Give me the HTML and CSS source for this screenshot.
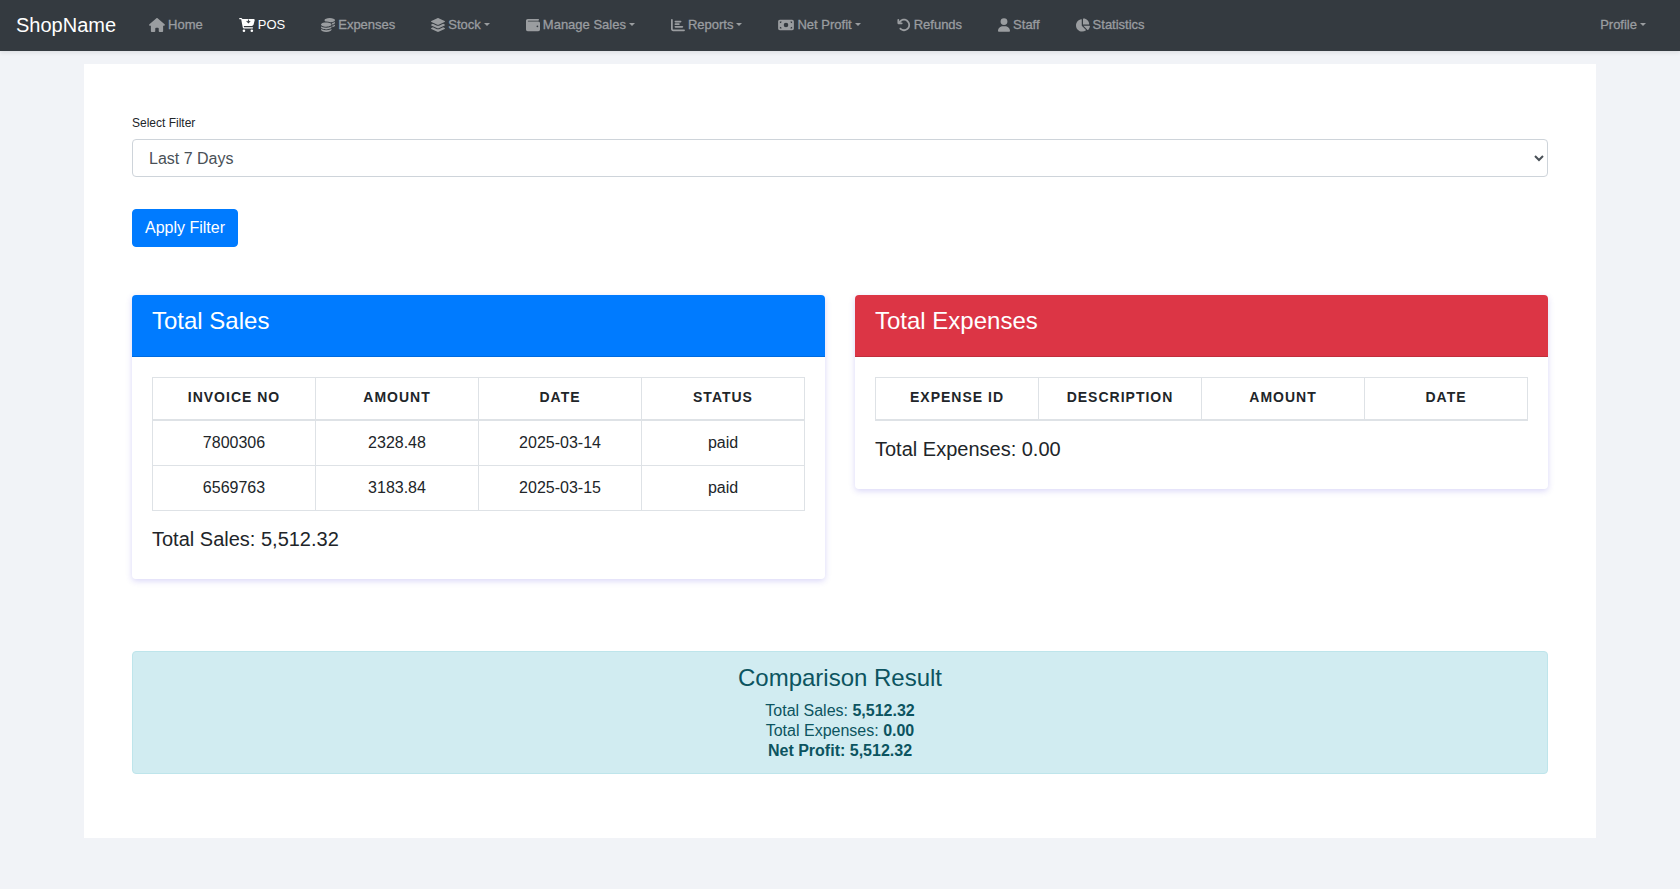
FILE: index.html
```html
<!DOCTYPE html>
<html lang="en">
<head>
<meta charset="utf-8">
<title>ShopName</title>
<link rel="stylesheet" href="styles.css">
</head>
<body>
<nav class="navbar">
  <a class="brand" href="#">ShopName</a>
  <ul class="nav">
    <li><a class="nav-link" href="#"><svg class="icon icon-wide" viewBox="0 0 576 512"><path d="M575.8 255.5c0 18-15 32.1-32 32.1l-32 0 .7 160.2c0 2.7-.2 5.4-.5 8.1l0 16.2c0 22.1-17.9 40-40 40l-16 0c-1.1 0-2.2 0-3.3-.1c-1.4 .1-2.8 .1-4.2 .1L416 512l-24 0c-22.1 0-40-17.9-40-40l0-24 0-64c0-17.7-14.3-32-32-32l-64 0c-17.7 0-32 14.3-32 32l0 64 0 24c0 22.1-17.9 40-40 40l-24 0-31.9 0c-1.5 0-3-.1-4.5-.2c-1.2 .1-2.4 .2-3.6 .2l-16 0c-22.1 0-40-17.9-40-40l0-112c0-.9 0-1.9 .1-2.8l0-69.7-32 0c-18 0-32-14-32-32.1c0-9 3-17 10-24L266.4 8c7-7 15-8 22-8s15 2 21 7L564.8 231.5c8 7 12 15 11 24z"/></svg>Home</a></li>
    <li><a class="nav-link active" href="#"><svg class="icon icon-wide" viewBox="0 0 576 512"><path fill-rule="evenodd" d="M24 0C10.700 0 0 10.700 0 24S10.700 48 24 48L69.500 48c3.800 0 7.100 2.700 7.900 6.500l51.600 271c6.500 34 36.200 58.500 70.700 58.500L488 384c13.300 0 24-10.700 24-24s-10.700-24-24-24l-288.300 0c-11.500 0-21.400-8.200-23.600-19.500L170.700 288l288.500 0c32.600 0 61.100-21.800 69.500-53.300l41-152.300C576.600 57 557.400 32 531.100 32L120.100 32C111 12.800 91.600 0 69.500 0L24 0zM322 56L358 56L358 132L394 98L419 123L340 202L261 123L286 98L322 132zM176 512a48 48 0 1 0 0-96 48 48 0 1 0 0 96zm336-48a48 48 0 1 0-96 0 48 48 0 1 0 96 0z"/></svg>POS</a></li>
    <li><a class="nav-link" href="#"><svg class="icon" viewBox="0 0 512 512"><path d="M512 80c0 18-14.300 34.600-38.400 48c-29.100 16.100-72.500 27.500-122.300 30.900c-3.700-1.800-7.400-3.500-11.300-5C300.600 137.400 248.200 128 192 128c-8.300 0-16.400 .2-24.500 .6l-1.100-.6C142.300 114.600 128 98 128 80c0-44.200 86-80 192-80S512 35.800 512 80zM160.700 161.100c10.200-.7 20.700-1.100 31.300-1.100c62.200 0 117.400 12.300 152.500 31.400C369.300 204.900 384 221.700 384 240c0 4-.7 7.900-2.100 11.700c-4.600 13.200-17 25.300-35 35.500c0 0 0 0 0 0c-.1 .1-.3 .1-.4 .2c-.3 .2-.6 .3-.9 .5c-35 19.400-90.800 32-153.600 32c-59.600 0-112.900-11.300-148.200-29.100c-1.900-.9-3.700-1.900-5.500-2.900C14.300 274.600 0 258 0 240c0-34.800 53.400-64.500 128-75.400c10.500-1.500 21.400-2.700 32.700-3.500zM416 240c0-21.900-10.600-39.900-24.100-53.400c28.300-4.400 54.200-11.400 76.200-20.500c16.300-6.800 31.500-15.200 43.900-25.500l0 35.400c0 19.300-16.500 37.100-43.800 50.900c-14.600 7.400-32.400 13.700-52.400 18.500c.1-1.800 .2-3.500 .2-5.300zm-32 96c0 18-14.300 34.600-38.400 48c-1.800 1-3.600 1.900-5.500 2.900C304.900 404.700 251.600 416 192 416c-62.800 0-118.600-12.600-153.600-32C14.300 370.600 0 354 0 336l0-35.400c12.500 10.300 27.600 18.700 43.900 25.500C83.400 342.600 135.800 352 192 352s108.600-9.400 148.100-25.900c7.800-3.200 15.300-6.900 22.400-10.900c6.100-3.400 11.800-7.200 17.200-11.200c1.500-1.100 2.900-2.300 4.300-3.400l0 3.400 0 5.700 0 26.300zm32 0l0-32 0-25.900c19-4.200 36.500-9.500 52.100-16c16.300-6.800 31.500-15.200 43.900-25.500l0 35.400c0 10.500-5 21-14.900 30.900c-16.300 16.300-45 29.700-81.300 38.400c.1-1.700 .2-3.500 .2-5.300zM192 448c56.200 0 108.600-9.400 148.100-25.900c16.300-6.800 31.500-15.200 43.900-25.500l0 35.400c0 44.200-86 80-192 80S0 476.200 0 432l0-35.400c12.500 10.300 27.600 18.700 43.900 25.500C83.400 438.600 135.800 448 192 448z"/></svg>Expenses</a></li>
    <li><a class="nav-link dropdown" href="#"><svg class="icon" viewBox="32 0 512 512"><path d="M264.5 5.2c14.900-6.900 32.100-6.900 47 0l218.600 101c8.500 3.900 13.900 12.400 13.900 21.800s-5.400 17.900-13.900 21.800l-218.600 101c-14.900 6.900-32.100 6.900-47 0L45.900 149.800C37.400 145.800 32 137.300 32 128s5.400-17.900 13.900-21.800L264.500 5.200zM476.900 209.600l53.200 24.600c8.500 3.900 13.900 12.400 13.900 21.800s-5.400 17.900-13.900 21.800l-218.600 101c-14.900 6.900-32.100 6.900-47 0L45.900 277.800C37.400 273.800 32 265.300 32 256s5.400-17.900 13.900-21.800l53.200-24.600 152 70.200c23.400 10.800 50.400 10.800 73.800 0l152-70.200zm-152 198.200l152-70.200 53.200 24.600c8.500 3.900 13.900 12.400 13.900 21.800s-5.400 17.900-13.900 21.800l-218.600 101c-14.900 6.900-32.100 6.900-47 0L45.900 405.800C37.400 401.800 32 393.300 32 384s5.400-17.900 13.900-21.800l53.200-24.600 152 70.200c23.400 10.800 50.400 10.800 73.800 0z"/></svg>Stock</a></li>
    <li><a class="nav-link dropdown" href="#"><svg class="icon" viewBox="0 0 512 512"><path d="M64 32C28.700 32 0 60.700 0 96L0 416c0 35.300 28.700 64 64 64l384 0c35.300 0 64-28.700 64-64l0-224c0-35.300-28.700-64-64-64L80 128c-8.800 0-16-7.200-16-16s7.200-16 16-16l368 0c17.700 0 32-14.300 32-32s-14.300-32-32-32L64 32zM416 272a32 32 0 1 1 0 64 32 32 0 1 1 0-64z"/></svg>Manage Sales</a></li>
    <li><a class="nav-link dropdown" href="#"><svg class="icon" viewBox="0 0 512 512"><path d="M32 32c17.700 0 32 14.300 32 32l0 336c0 8.800 7.200 16 16 16l400 0c17.700 0 32 14.300 32 32s-14.300 32-32 32L80 480c-44.200 0-80-35.800-80-80L0 64C0 46.300 14.300 32 32 32zm96 96c0-17.700 14.300-32 32-32l192 0c17.700 0 32 14.300 32 32s-14.300 32-32 32l-192 0c-17.700 0-32-14.300-32-32zm32 64l128 0c17.700 0 32 14.300 32 32s-14.300 32-32 32l-128 0c-17.700 0-32-14.300-32-32s14.300-32 32-32zm0 96l256 0c17.700 0 32 14.300 32 32s-14.300 32-32 32l-256 0c-17.700 0-32-14.300-32-32s14.300-32 32-32z"/></svg>Reports</a></li>
    <li><a class="nav-link dropdown" href="#"><svg class="icon icon-wide" viewBox="0 0 576 512"><path fill-rule="evenodd" d="M64 64C28.700 64 0 92.700 0 128L0 384c0 35.300 28.700 64 64 64l448 0c35.300 0 64-28.700 64-64l0-256c0-35.300-28.700-64-64-64L64 64zM128 384A64 64 0 0 0 64 320L64 384zM64 192A64 64 0 0 0 128 128L64 128zM512 320A64 64 0 0 0 448 384L512 384zM448 128A64 64 0 0 0 512 192L512 128zM288 172a84 84 0 1 1 0 168 84 84 0 1 1 0-168z"/></svg>Net Profit</a></li>
    <li><a class="nav-link" href="#"><svg class="icon" viewBox="0 0 512 512"><path d="M125.700 160l50.300 0c17.700 0 32 14.300 32 32s-14.300 32-32 32L48 224c-17.700 0-32-14.300-32-32L16 64c0-17.700 14.300-32 32-32s32 14.300 32 32l0 51.200L97.600 97.600c87.500-87.500 229.300-87.500 316.800 0s87.500 229.300 0 316.800s-229.300 87.500-316.800 0c-12.500-12.500-12.500-32.800 0-45.300s32.800-12.500 45.300 0c62.500 62.500 163.800 62.500 226.300 0s62.500-163.800 0-226.300s-163.800-62.500-226.300 0L125.700 160z"/></svg>Refunds</a></li>
    <li><a class="nav-link" href="#"><svg class="icon icon-narrow" viewBox="0 0 448 512"><path d="M224 256A128 128 0 1 0 224 0a128 128 0 1 0 0 256zm-45.700 48C79.800 304 0 383.800 0 482.300C0 498.700 13.300 512 29.700 512l388.600 0c16.400 0 29.700-13.300 29.700-29.700C448 383.800 368.200 304 269.700 304l-91.400 0z"/></svg>Staff</a></li>
    <li><a class="nav-link" href="#"><svg class="icon" viewBox="32 0 544 512"><path d="M304 240l0-223.400c0-9 7-16.600 16-16.600C443.700 0 544 100.300 544 224c0 9-7.600 16-16.600 16L304 240zM32 272C32 150.700 122.100 50.300 239 34.300c9.200-1.300 17 6.100 17 15.400L256 288 412.500 444.500c6.700 6.700 6.200 17.700-1.500 23.100C371.800 495.600 323.800 512 272 512C139.500 512 32 404.600 32 272zm526.400 16c9.300 0 16.600 7.800 15.400 17c-7.700 55.900-34.600 105.600-73.900 142.300c-6 5.600-15.400 5.200-21.200-.7L320 288l238.400 0z"/></svg>Statistics</a></li>
  </ul>
  <a class="nav-link dropdown" href="#">Profile</a>
</nav>

<main class="container">
  <form class="filter">
    <label class="filter-label" for="filter">Select Filter</label>
    <select class="filter-select" id="filter">
      <option>Last 7 Days</option>
    </select>
    <button class="btn" type="button">Apply Filter</button>
  </form>

  <div class="cards">
    <section class="card">
      <header class="card-header sales"><h4 class="title">Total Sales</h4></header>
      <div class="card-body">
        <table class="table">
          <thead><tr><th>Invoice No</th><th>Amount</th><th>Date</th><th>Status</th></tr></thead>
          <tbody>
            <tr><td>7800306</td><td>2328.48</td><td>2025-03-14</td><td>paid</td></tr>
            <tr><td>6569763</td><td>3183.84</td><td>2025-03-15</td><td>paid</td></tr>
          </tbody>
        </table>
        <h5 class="total">Total Sales: 5,512.32</h5>
      </div>
    </section>
    <section class="card">
      <header class="card-header expenses"><h4 class="title">Total Expenses</h4></header>
      <div class="card-body">
        <table class="table">
          <thead><tr><th>Expense ID</th><th>Description</th><th>Amount</th><th>Date</th></tr></thead>
        </table>
        <h5 class="total">Total Expenses: 0.00</h5>
      </div>
    </section>
  </div>

  <section class="result">
    <h4 class="title">Comparison Result</h4>
    <div>Total Sales: <strong>5,512.32</strong></div>
    <div>Total Expenses: <strong>0.00</strong></div>
    <div><strong>Net Profit: 5,512.32</strong></div>
  </section>
</main>
</body>
</html>
```
FILE: styles.css
```css
* { box-sizing: border-box; }

body {
  margin: 0;
  background: #f1f3f7;
  color: #212529;
  font-family: "Liberation Sans", Arial, sans-serif;
  font-size: 16px;
  line-height: 20px;
}

.navbar {
  display: flex;
  align-items: center;
  padding: 10px 16px;
  background: #343a40;
  box-shadow: 0 2px 4px rgba(0, 0, 0, 0.08);
}

.brand {
  margin-right: 15px;
  color: #fff;
  font-size: 20px;
  line-height: 31px;
  text-decoration: none;
}

.nav {
  display: flex;
  flex: 1;
  margin: 0;
  padding: 0;
  list-style: none;
}

.nav-link {
  display: flex;
  align-items: center;
  gap: 3px;
  padding: 0 18px 2px;
  color: #9a9da0;
  font-size: 13px;
  -webkit-text-stroke: 0.3px currentColor;
  text-decoration: none;
  white-space: nowrap;
}

.nav-link.active {
  color: #fff;
  -webkit-text-stroke-width: 0;
}

.dropdown::after {
  content: "";
  border-top: 3px solid;
  border-right: 3px solid transparent;
  border-left: 3px solid transparent;
}

.icon {
  width: 14px;
  height: 14px;
  fill: currentColor;
}

.icon-wide { width: 16px; }
.icon-narrow { width: 12px; }

.container {
  width: 90%;
  margin: 13px auto 48px;
  padding: 52px 48px 64px;
  background: #fff;
}

.filter {
  display: flex;
  flex-direction: column;
  align-items: flex-start;
}

.filter-label {
  margin-bottom: 8px;
  font-size: 12px;
  line-height: 15px;
}

.filter-select {
  width: 100%;
  height: 38px;
  margin-bottom: 32px;
  padding: 6px 12px;
  border: 1px solid #ced4da;
  border-radius: 4px;
  background: #fff;
  color: #495057;
  font: inherit;
}

.btn {
  padding: 8px 12px;
  border: 1px solid #007bff;
  border-radius: 4px;
  background: #007bff;
  color: #fff;
  font: inherit;
}

.cards {
  display: grid;
  grid-template-columns: 1fr 1fr;
  align-items: start;
  gap: 30px;
  margin: 48px 0 72px;
}

.card {
  border-radius: 4px;
  background: #fff;
  box-shadow: 0 2px 6px rgba(80, 70, 220, 0.22);
  overflow: hidden;
}

.card-header {
  padding: 12px 20px;
  border-bottom: 1px solid rgba(0, 0, 0, 0.125);
  color: #fff;
}

.sales { background-color: #007bff; }
.expenses { background-color: #dc3545; }

.title {
  margin: 0 0 10px;
  font-size: 24px;
  font-weight: 400;
  line-height: 27px;
}

.card-body { padding: 20px; }

.table {
  width: 100%;
  margin-bottom: 16px;
  border-collapse: collapse;
  table-layout: fixed;
  text-align: center;
}

.table th,
.table td {
  padding: 12px;
  border: 1px solid #dee2e6;
}

.table th {
  padding: 11px 0 13px;
  border-bottom-width: 2px;
  font-size: 14px;
  letter-spacing: 1px;
  line-height: 17px;
  text-transform: uppercase;
}

.total {
  margin: 0 0 8px;
  font-size: 20px;
  font-weight: 400;
  line-height: 24px;
}

.result {
  padding: 12px 20px;
  border: 1px solid #bee5eb;
  border-radius: 4px;
  background: #d1ecf1;
  color: #0c5460;
  text-align: center;
}
```
